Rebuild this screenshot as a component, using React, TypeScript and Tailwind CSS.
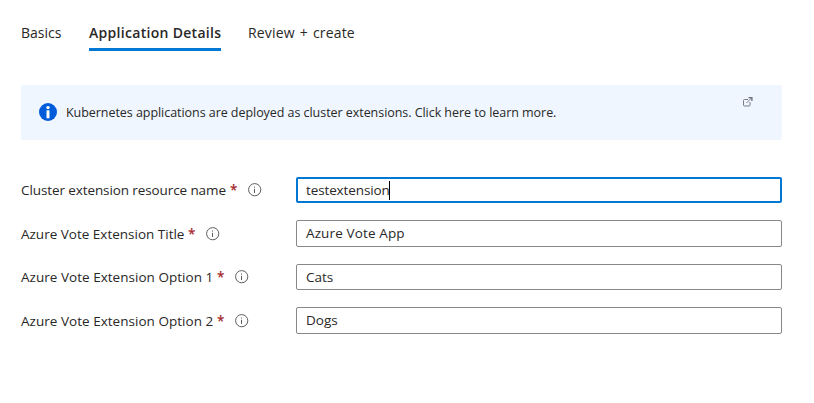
import React from "react";

const tabs = [
  { label: "Basics", box: "w-[40px] mr-[28px]", text: "", active: false },
  { label: "Application Details", box: "w-[132px] mr-[26px]", text: "font-semibold tracking-[0.3px]", active: true },
  { label: "Review + create", box: "w-[110px] pl-px", text: "tracking-[0.15px] [word-spacing:1.3px]", active: false },
];

const fields = [
  { label: "Cluster extension resource name", value: "testextension", labelBox: "w-[209px] tracking-[-0.1px]", valueText: "tracking-[-0.12px]", row: "h-[26px]", labelRow: "", focused: true },
  { label: "Azure Vote Extension Title", value: "Azure Vote App", labelBox: "w-[167px]", valueText: "tracking-[0.13px]", row: "h-[27px]", labelRow: "pt-px", focused: false },
  { label: "Azure Vote Extension Option 1", value: "Cats", labelBox: "w-[196px] tracking-[0.03px]", valueText: "", row: "h-[26px]", labelRow: "", focused: false },
  { label: "Azure Vote Extension Option 2", value: "Dogs", labelBox: "w-[196px] tracking-[0.03px]", valueText: "", row: "h-[27px]", labelRow: "pt-px", focused: false },
];

function InfoOutline() {
  return (
    <svg className="ml-[10px] size-[14px] shrink-0" viewBox="0 0 14 14" fill="none">
      <circle cx="6.7" cy="6.7" r="6.1" stroke="#605e5c" />
      <path d="M6.500 5.800v4.200M6.500 3.500v1.100" stroke="#605e5c" />
    </svg>
  );
}

function InfoSolid() {
  return (
    <svg className="mb-[2px] size-[18px] shrink-0" viewBox="0 0 18 18">
      <circle cx="9" cy="9" r="9" fill="#015cda" />
      <circle cx="9" cy="4.6" r="1.7" fill="#fff" />
      <rect x="7.500" y="7.300" width="3" height="8" rx="0.4" fill="#fff" />
    </svg>
  );
}

function ExternalLink() {
  return (
    <svg className="size-[10px] shrink-0" viewBox="0 0 10 10" fill="none" stroke="#6b7078">
      <path d="M5 2.500H1.500a1 1 0 0 0-1 1v4.500a1 1 0 0 0 1 1h4.500a1 1 0 0 0 1-1V5" strokeWidth="0.9" />
      <path d="M3.500 6L8.500 1" strokeWidth="0.9" />
      <path d="M5.500 .6h3.400V4" strokeWidth="1.300" />
    </svg>
  );
}

export default function App() {
  return (
    <main className="h-[403px] w-[814px] overflow-hidden bg-white pl-[21px] pt-[20px] font-['Open_Sans','Noto_Sans',sans-serif] text-[13.5px] text-[#292827]">
      <nav className="flex h-[31px] whitespace-nowrap text-[14px] leading-[26px]">
        {tabs.map((tab) => (
          <div key={tab.label} className={`h-[31px] shrink-0 ${tab.box} ${tab.active ? "border-b-3 border-[#0078d4]" : ""}`}>
            <span className={tab.text}>{tab.label}</span>
          </div>
        ))}
      </nav>

      <section className="mt-[34px] flex h-[55px] w-[761px] rounded-[2px] bg-[#eff6ff] pl-[18px] pr-[29px]">
        <div className="flex flex-1 items-center gap-[9px] whitespace-nowrap">
          <InfoSolid />
          <span className="pt-px text-[12.5px] tracking-[-0.05px]">
            Kubernetes applications are deployed as cluster extensions. Click here to learn more.
          </span>
        </div>
        <div className="pt-[12px]">
          <ExternalLink />
        </div>
      </section>

      <form className="mt-[37px] flex w-[761px] flex-col gap-[17px]">
        {fields.map((field) => (
          <div key={field.label} className={`flex items-center ${field.row}`}>
            <label className={`flex w-[275px] items-center whitespace-nowrap ${field.labelRow}`}>
              <span className={`shrink-0 ${field.labelBox}`}>{field.label}</span>
              <span className="w-[8px] shrink-0 font-semibold text-[#a4262c]">*</span>
              <InfoOutline />
            </label>
            <div
              className={`flex h-full flex-1 items-center rounded-[2px] ${
                field.focused ? "border-2 border-[#0078d4] pl-[8px]" : "border border-[#8a8886] pl-[9px]"
              }`}
            >
              <span className={field.valueText}>{field.value}</span>
              {field.focused && <span className="-ml-px h-[19px] w-px bg-black" />}
            </div>
          </div>
        ))}
      </form>
    </main>
  );
}
